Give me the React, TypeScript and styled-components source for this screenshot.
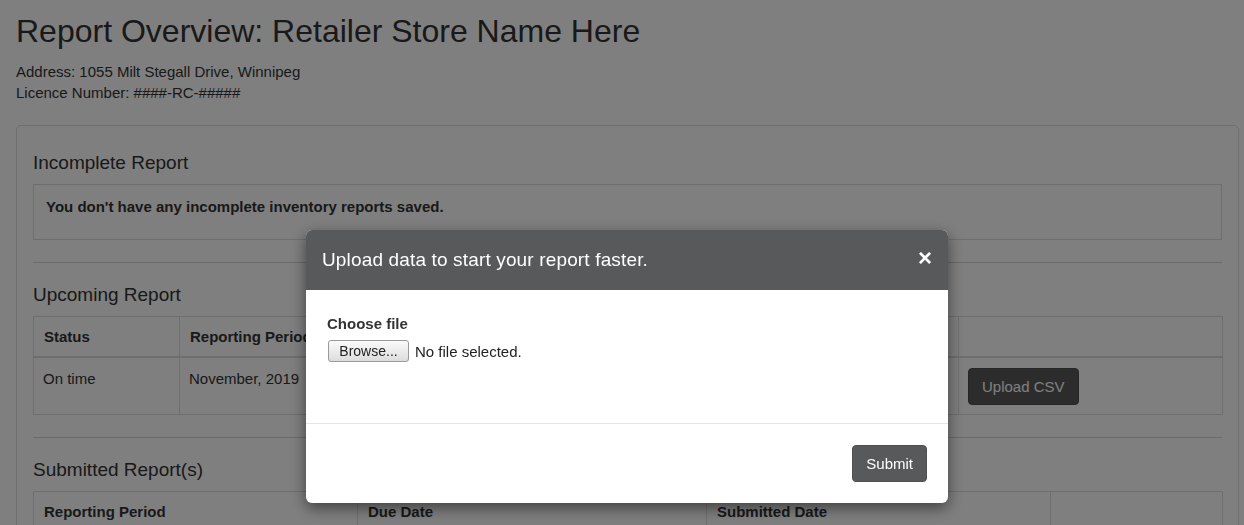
import React from 'react';
import styled, {createGlobalStyle} from 'styled-components';

const GlobalStyle = createGlobalStyle`
    html, body {
        margin: 0;
        padding: 0;
        background: #fff;
    }
    body {
        font-family: "Liberation Sans", Arial, Helvetica, sans-serif;
        font-size: 15px;
        line-height: 21px;
        color: #333;
    }
    * {
        box-sizing: border-box;
    }
`;

type Column = {title: string; width: number};

const upcomingColumns: Column[] = [
    {title: 'Status', width: 146},
    {title: 'Reporting Period', width: 260},
    {title: 'Due Date', width: 260},
    {title: 'Days Remaining', width: 259},
    {title: '', width: 264},
];

const submittedColumns: Column[] = [
    {title: 'Reporting Period', width: 324},
    {title: 'Due Date', width: 349},
    {title: 'Submitted Date', width: 344},
    {title: '', width: 172},
];

const submittedRows = [
    ['October, 2019', 'November 15, 2019', 'November 12, 2019'],
    ['September, 2019', 'October 15, 2019', 'October 9, 2019'],
];

const App: React.FunctionComponent = () => {
    return (
        <>
            <GlobalStyle/>
            <Page>
                <Title>Report Overview: Retailer Store Name Here</Title>
                <MetaLine>Address: 1055 Milt Stegall Drive, Winnipeg</MetaLine>
                <MetaLine>Licence Number: ####-RC-#####</MetaLine>
                <Panel>
                    <SectionTitle>Incomplete Report</SectionTitle>
                    <InfoBox>You don't have any incomplete inventory reports saved.</InfoBox>
                    <Divider/>
                    <SectionTitle>Upcoming Report</SectionTitle>
                    <Table>
                        <thead>
                            <tr>
                                {upcomingColumns.map((col, i) => (
                                    <Th key={i} $width={col.width}>{col.title}</Th>
                                ))}
                            </tr>
                        </thead>
                        <tbody>
                            <tr>
                                <Td>On time</Td>
                                <Td>November, 2019</Td>
                                <Td>December 15, 2019</Td>
                                <Td>34</Td>
                                <Td><DarkButton>Upload CSV</DarkButton></Td>
                            </tr>
                        </tbody>
                    </Table>
                    <Divider/>
                    <SectionTitle>Submitted Report(s)</SectionTitle>
                    <Table>
                        <thead>
                            <tr>
                                {submittedColumns.map((col, i) => (
                                    <Th key={i} $width={col.width}>{col.title}</Th>
                                ))}
                            </tr>
                        </thead>
                        <tbody>
                            {submittedRows.map((row, i) => (
                                <tr key={i}>
                                    {row.map((cell, j) => <Td key={j}>{cell}</Td>)}
                                    <Td>View</Td>
                                </tr>
                            ))}
                        </tbody>
                    </Table>
                </Panel>
            </Page>
            <Backdrop>
                <Modal>
                    <ModalHeader>
                        <ModalTitle>Upload data to start your report faster.</ModalTitle>
                        <CloseButton aria-label="Close">×</CloseButton>
                    </ModalHeader>
                    <ModalBody>
                        <FieldLabel>Choose file</FieldLabel>
                        <FilePicker>
                            <BrowseButton>Browse...</BrowseButton>
                            <FileName>No file selected.</FileName>
                        </FilePicker>
                    </ModalBody>
                    <ModalFooter>
                        <DarkButton $compact>Submit</DarkButton>
                    </ModalFooter>
                </Modal>
            </Backdrop>
        </>
    );
}

const Page = styled.div`
    padding: 0 5px 40px 16px;
`;

const Title = styled.h1`
    font-size: 32px;
    font-weight: 400;
    line-height: 35px;
    margin: 14px 0 12px;
`;

const MetaLine = styled.div`
    font-size: 15px;
    line-height: 21px;
`;

const Panel = styled.div`
    margin-top: 22px;
    border: 1px solid #ddd;
    border-radius: 5px;
    padding: 5px 16px 16px;
`;

const SectionTitle = styled.h4`
    font-size: 19px;
    font-weight: 400;
    line-height: 22px;
    margin: 21px 0 10px;
`;

const InfoBox = styled.div`
    margin-top: 1px;
    border: 1px solid #ddd;
    padding: 11px 12px 22px;
    font-weight: bold;
`;

const Divider = styled.hr`
    border: 0;
    border-top: 1px solid #d6d6d6;
    margin: 22px 0 0;
`;

const Table = styled.table`
    width: 100%;
    table-layout: fixed;
    border-collapse: collapse;
    border: 1px solid #ddd;
`;

const Th = styled.th<{$width: number}>`
    width: ${p => p.$width}px;
    text-align: left;
    font-weight: bold;
    padding: 9px 10px;
    border: 1px solid #ddd;
    border-bottom: 2px solid #ddd;
`;

const Td = styled.td`
    vertical-align: top;
    padding: 10px 9px 9px;
    border: 1px solid #ddd;
`;

const DarkButton = styled.button<{$compact?: boolean}>`
    display: inline-block;
    height: ${p => p.$compact ? 37 : 37}px;
    padding: 0 13px;
    background: #58595b;
    color: #fff;
    border: 1px solid #4e4f51;
    border-radius: 4px;
    font-family: inherit;
    font-size: 15px;
    line-height: 21px;
    cursor: pointer;
`;

const Backdrop = styled.div`
    position: fixed;
    inset: 0;
    background: rgba(0, 0, 0, 0.5);
    padding: 230px 0 0 306px;
`;

const Modal = styled.div`
    width: 642px;
    background: #fff;
    border-radius: 6px;
    overflow: hidden;
    box-shadow: 0 5px 15px rgba(0, 0, 0, 0.5);
`;

const ModalHeader = styled.div`
    display: flex;
    align-items: flex-start;
    justify-content: space-between;
    background: #58595b;
    color: #fff;
    padding: 16px;
    border-bottom: 1px solid #58595b;
`;

const ModalTitle = styled.h4`
    margin: 0;
    font-size: 19px;
    font-weight: 400;
    line-height: 27px;
    letter-spacing: 0.15px;
`;

const CloseButton = styled.button`
    background: none;
    border: 0;
    padding: 0;
    margin-top: 0;
    color: #fff;
    font-family: inherit;
    font-size: 24px;
    font-weight: bold;
    line-height: 1;
    cursor: pointer;
`;

const ModalBody = styled.div`
    padding: 23px 21px 61px;
`;

const FieldLabel = styled.label`
    display: block;
    font-weight: bold;
    margin-bottom: 6px;
`;

const FilePicker = styled.div`
    display: flex;
    align-items: center;
    gap: 6px;
`;

const BrowseButton = styled.button`
    height: 22px;
    width: 81px;
    padding: 0;
    margin-left: 1px;
    font-family: inherit;
    font-size: 14px;
    color: #222;
    background: linear-gradient(#fbfbfb, #dcdcdc);
    border: 1px solid #9a9a9a;
    border-radius: 3px;
`;

const FileName = styled.span`
    font-size: 15px;
    color: #222;
`;

const ModalFooter = styled.div`
    display: flex;
    justify-content: flex-end;
    border-top: 1px solid #e5e5e5;
    padding: 21px;
`;

export default App;
